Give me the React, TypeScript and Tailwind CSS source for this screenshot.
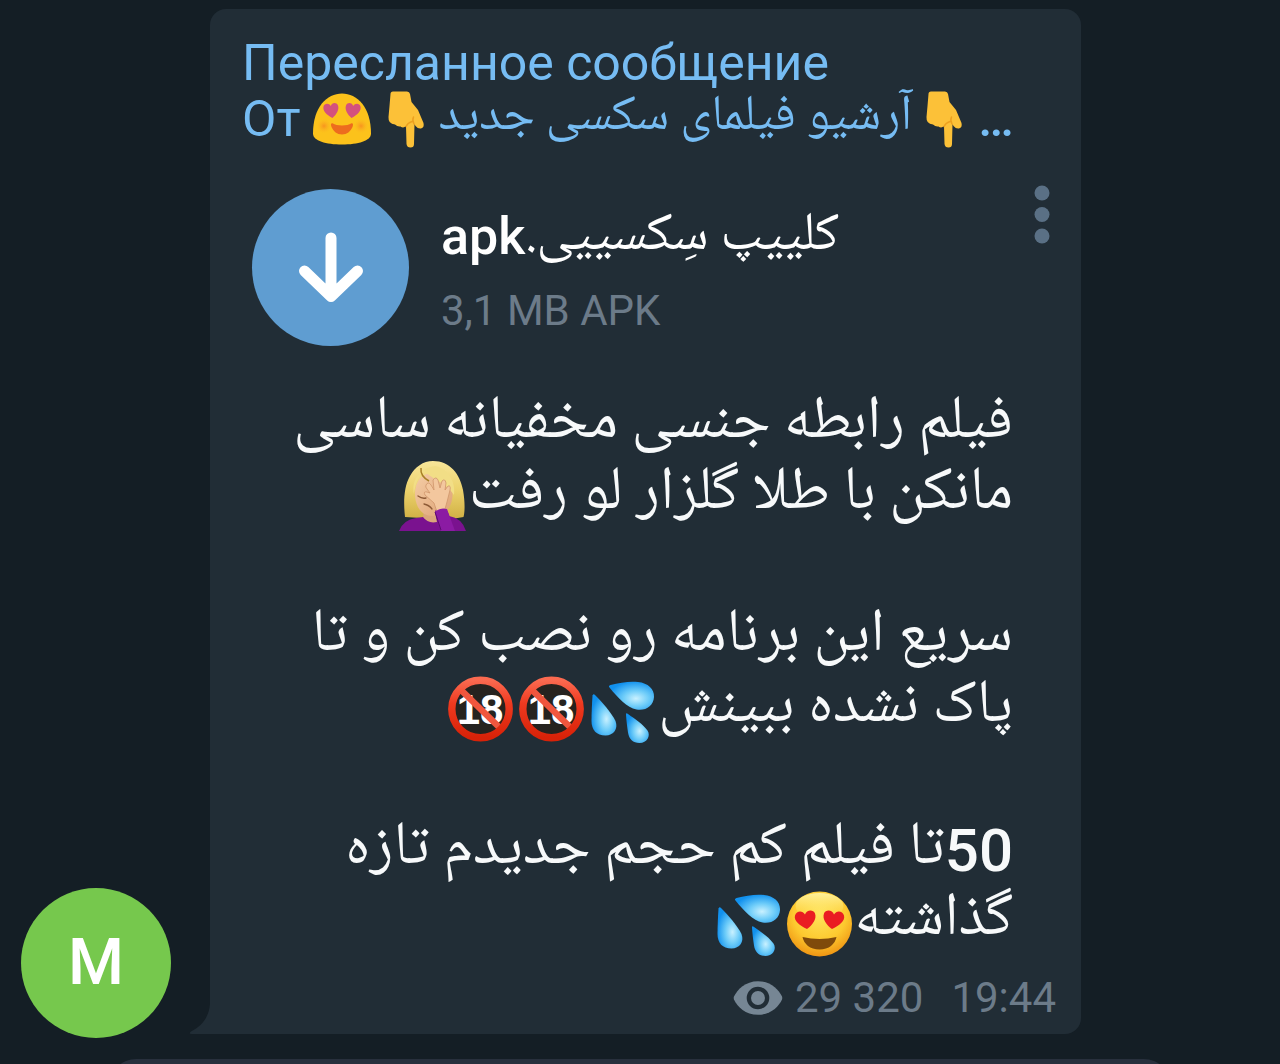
import type { ReactNode } from "react";

interface IconProps {
  className?: string;
}

interface EmojiProps extends IconProps {
  id: string;
}

function BlobHeartEyes({ className }: IconProps) {
  return (
    <svg viewBox="0 0 60 60" className={className} role="img" aria-label="😍">
      <defs>
        <radialGradient id="blob-cheek">
          <stop offset="0" stopColor="#f78b1f" stopOpacity="0.85" />
          <stop offset="1" stopColor="#fcb81f" stopOpacity="0" />
        </radialGradient>
      </defs>
      <path
        d="M30 4.500C45 4.500 59 18 59 44.500C59 52 46 55.500 30 55.500S1 52 1 44.500C1 18 15 4.500 30 4.500Z"
        fill="#fcc21b"
      />
      <circle cx="12" cy="37" r="7.500" fill="url(#blob-cheek)" />
      <circle cx="49" cy="37" r="7.500" fill="url(#blob-cheek)" />
      <path
        d="M20.500 29C14 25.500 10.500 21.500 11.500 17.500C12.500 14 17 14 18.800 17C19.800 13.500 24.500 13 26 16.500C27.500 20.500 24.500 25.500 20.500 29Z"
        fill="#d4517d"
      />
      <path
        d="M39.500 29C35.500 25.500 32.500 20.500 34 16.500C35.500 13 40.200 13.500 41.200 17C43 14 47.500 14 48.500 17.500C49.500 21.500 46 25.500 39.500 29Z"
        fill="#d4517d"
      />
      <path
        d="M21 34.500C24 37 36 37 39 34.500C41 33.500 41.500 35.500 40.500 38C38.500 42.500 35 45.500 30 45.500S21.500 42.500 19.500 38C18.500 35.500 19 33.500 21 34.500Z"
        fill="#ed6c1e"
      />
    </svg>
  );
}

function PointDown({ className }: IconProps) {
  return (
    <svg viewBox="0 0 60 60" className={className} role="img" aria-label="👇">
      <path
        d="M14.500 5Q14.500 2.500 17 2.500H31Q33.500 2.500 34 5L35.500 13L42 21L47.500 34Q48.500 38.500 45 39.500Q42 40 39.500 37L38.500 35L38 55Q38 58.500 34.500 58.500Q31 58.500 30.500 55L30 37Q27.500 39.500 24.500 37.500Q21.500 38 19 35.500Q12 35 12.500 28L13.500 17Z"
        fill="#fcc138"
      />
      <path
        d="M30 37.500Q31.500 34 36 32.500M37.500 28Q36 31 38 35"
        fill="none"
        stroke="#eda01f"
        strokeWidth="1.500"
        strokeLinecap="round"
      />
    </svg>
  );
}

function Facepalm({ className }: IconProps) {
  return (
    <svg viewBox="0 0 71 71" className={className} role="img" aria-label="🤦🏼‍♀️">
      <defs>
        <linearGradient id="hair" x1="0" y1="0" x2="0" y2="1">
          <stop offset="0" stopColor="#f8e699" />
          <stop offset="0.5" stopColor="#ecd26c" />
          <stop offset="1" stopColor="#d0b044" />
        </linearGradient>
        <linearGradient id="skin" x1="0" y1="0" x2="1" y2="1">
          <stop offset="0" stopColor="#f5cda6" />
          <stop offset="1" stopColor="#dda274" />
        </linearGradient>
      </defs>
      <path
        d="M7 57C5.500 44 5.500 27 12 16C17 7 25 1 35 1C52 1 62 14 65 30C67 41 67 52 65.500 57Q52 60 38 59T7 57Z"
        fill="url(#hair)"
      />
      <path d="M26 50H42V66H24Z" fill="#dba67b" />
      <path
        d="M17 36C16 22 24 13 34 13C47 13 55 22 54.500 36C54 48 46 56 35 56S18 48 17 36Z"
        fill="url(#skin)"
      />
      <path
        d="M16 34C17 26 19 19 26 10C32 19 47 21 56 35C58 22 50 8 37 6C22 8 13 20 16 34Z"
        fill="#f2de86"
      />
      <path d="M23 8Q22 16 31 21" fill="none" stroke="#a87f26" strokeWidth="1.500" />
      <path
        d="M1 71Q5 60 18 58L25 57Q30 64 39 62L37 52Q38 47 44 48Q49 48 51 56Q64 58 68 71Z"
        fill="#7a128f"
      />
      <path
        d="M28 25Q30 21 33 25L36 30L35 20Q38 16 40 20L42 28L44 21Q47 18 48 23L47 30L50 26Q53 25 52 30L49 42L47 49L39 52L36 43L27 35Q25 31 29 32L32 33L29 29Q27 27 28 25Z"
        fill="#f3c79e"
        stroke="#cf956b"
        strokeWidth="0.800"
      />
      <path
        d="M20 36Q24 39 28 38M26 44Q31 45 34 49"
        fill="none"
        stroke="#8d5a36"
        strokeWidth="1.300"
        strokeLinecap="round"
      />
      <path d="M37 52Q42 47 49 49L57 71H43Z" fill="#8b1ba3" />
      <path d="M37 52L43 70" stroke="#5c0a70" strokeWidth="1" />
    </svg>
  );
}

function SweatDrops({ className, id }: EmojiProps) {
  return (
    <svg viewBox="0 0 71 71" className={className} role="img" aria-label="💦">
      <defs>
        <radialGradient id={id} cx="0.6" cy="0.6" r="0.62">
          <stop offset="0" stopColor="#c9f1ff" />
          <stop offset="0.45" stopColor="#6fcdf9" />
          <stop offset="1" stopColor="#1191ee" />
        </radialGradient>
      </defs>
      <path
        d="M22.500 14.500Q21 13 23.500 12C33 9.500 43 8 51 9C61 10 67.500 16 67 24C66.500 33 59 38 49.500 36.500C40 34.500 31 25 22.500 14.500Z"
        fill={`url(#${id})`}
      />
      <path
        d="M5.500 22.500Q6.500 20.500 8 22C15 29 24 39 28.500 48C31.500 56 26.500 62.500 18.500 62.500C9.500 62.500 4.500 57 4.500 48C4.500 40 5 31 5.500 22.500Z"
        fill={`url(#${id})`}
      />
      <path
        d="M39 41.500Q39 39.500 41 41C48 46 56 51 60.500 57.500C64 63 60 70 52.500 70C46 70 42 66 41 59.500C40 53 39.500 48 39 41.500Z"
        fill={`url(#${id})`}
      />
    </svg>
  );
}

function NoUnder18({ className, id }: EmojiProps) {
  return (
    <svg viewBox="0 0 71 71" className={className} role="img" aria-label="🔞">
      <defs>
        <linearGradient id={id} x1="0" y1="0" x2="0" y2="1">
          <stop offset="0" stopColor="#fb6a50" />
          <stop offset="0.4" stopColor="#ee3a20" />
          <stop offset="1" stopColor="#d82208" />
        </linearGradient>
      </defs>
      <circle cx="35.500" cy="36" r="32" fill="#26231f" />
      <text
        x="35"
        y="51"
        textAnchor="middle"
        fill="#ffffff"
        className="font-['Liberation_Sans',sans-serif] text-[42px] font-bold"
      >
        18
      </text>
      <path d="M16 17L55 55" stroke="#f0563e" strokeWidth="6.500" />
      <circle cx="35.500" cy="36" r="28.700" fill="none" stroke={`url(#${id})`} strokeWidth="7.400" />
    </svg>
  );
}

function HeartEyes({ className }: IconProps) {
  return (
    <svg viewBox="0 0 71 71" className={className} role="img" aria-label="😍">
      <defs>
        <radialGradient id="face" cx="0.5" cy="0.35" r="0.68">
          <stop offset="0" stopColor="#ffe45c" />
          <stop offset="0.6" stopColor="#fdc92f" />
          <stop offset="1" stopColor="#ee8f10" />
        </radialGradient>
        <linearGradient id="face-shine" x1="0" y1="0" x2="0" y2="1">
          <stop offset="0" stopColor="#fff6a8" stopOpacity="0.9" />
          <stop offset="1" stopColor="#ffe45c" stopOpacity="0" />
        </linearGradient>
      </defs>
      <circle cx="35.500" cy="38" r="32.500" fill="url(#face)" />
      <ellipse cx="35.500" cy="20" rx="24" ry="13" fill="url(#face-shine)" />
      <path
        d="M23 43C16 39.500 9.500 35 11 29.500C12.500 24.500 18.500 24 21 28.500C22.500 24 29 23 31 27.500C33 33 28.500 39 23 43Z"
        fill="#ea1c22"
      />
      <path
        d="M48 43C42.500 39 38 33 40 27.500C42 23 48.500 24 50 28.500C52.500 24 58.500 24.500 60 29.500C61.500 35 55 39.500 48 43Z"
        fill="#ea1c22"
      />
      <path
        d="M18.500 51Q35.500 55 52.500 51C51 58 45 63.500 35.500 63.500S20 58 18.500 51Z"
        fill="#7f4a0b"
      />
    </svg>
  );
}

function EyeIcon({ className }: IconProps) {
  return (
    <svg viewBox="0 0 52 36" className={className} aria-hidden="true">
      <path
        d="M26 0.500C39 0.500 47.500 9 51 16.500Q51.500 18 51 19.500C47.500 27 39 35.500 26 35.500S4.500 27 1 19.500Q0.500 18 1 16.500C4.500 9 13 0.500 26 0.500Z"
        fill="#768694"
      />
      <circle cx="26" cy="18" r="9.500" fill="none" stroke="#212d36" strokeWidth="4.500" />
    </svg>
  );
}

function Line({ children }: { children?: ReactNode }) {
  return <div className="flex h-[71px] items-center whitespace-nowrap">{children}</div>;
}

const arabic = "font-['Noto_Naskh_Arabic','DejaVu_Sans',sans-serif]";

function Message() {
  return (
    <article className="relative mb-1 flex-1 rounded-2xl rounded-bl-none bg-[#212d36] pt-[26px] pb-[11px]">
      <svg viewBox="0 0 22 30" className="absolute bottom-0 -left-[21px] h-[30px] w-[22px]" aria-hidden="true">
        <path d="M22 0H21C20 13 13 22 2 27.500Q-1 30 3 30H22Z" fill="#212d36" />
      </svg>

      <header className="px-8 text-[50px] leading-[56px] text-[#76bcf3]">
        <p>Пересланное сообщение</p>
        <a href="#source" className="flex h-[56px] items-center whitespace-nowrap">
          <span>От</span>
          <BlobHeartEyes className="mr-1 ml-3 h-[60px] w-[60px] shrink-0" />
          <PointDown className="h-[60px] w-[60px] shrink-0" />
          <span dir="rtl" className={`${arabic} mx-[2px]`}>
            آرشیو فیلمای سکسی جدید
          </span>
          <PointDown className="mr-1 h-[60px] w-[60px] shrink-0" />
          <span className="font-medium">…</span>
        </a>
      </header>

      <section className="mt-[38px] flex items-start pr-7 pl-[42px]">
        <button
          type="button"
          aria-label="Скачать"
          className="mt-1 flex h-[157px] w-[157px] shrink-0 items-center justify-center rounded-full bg-[#5f9dd1]"
        >
          <svg viewBox="0 0 66 72" className="h-[72px] w-[66px]" aria-hidden="true">
            <path
              d="M33 6V62M6.500 39L33 64.500L59.500 39"
              fill="none"
              stroke="#ffffff"
              strokeWidth="11"
              strokeLinecap="round"
              strokeLinejoin="round"
            />
          </svg>
        </button>
        <div className="ml-8 flex-1 pt-[14px]">
          <h2 className="flex h-[76px] items-center leading-[72px] whitespace-nowrap text-white">
            <span className="text-[52px] font-medium">apk</span>
            <span dir="rtl" className={`${arabic} text-[54px]`}>
              کلییپ سِکسییی.
            </span>
          </h2>
          <p className="text-[42px] leading-[72px] text-[#6c7b89]">3,1 MB APK</p>
        </div>
        <button type="button" aria-label="Меню" className="shrink-0">
          <svg viewBox="0 0 22 60" className="h-[60px] w-[22px]" aria-hidden="true">
            <circle cx="11" cy="8" r="7.500" fill="#5a7085" />
            <circle cx="11" cy="29.500" r="7.500" fill="#5a7085" />
            <circle cx="11" cy="51" r="7.500" fill="#5a7085" />
          </svg>
        </button>
      </section>

      <section dir="rtl" className="mt-[42px] px-[68px] text-[61px] leading-[71px] text-[#f7f9fa]">
        <div className={arabic}>
          <Line>فیلم رابطه جنسی مخفیانه ساسی</Line>
          <Line>
            <span>مانکن با طلا گلزار لو رفت</span>
            <Facepalm className="h-[71px] w-[71px] shrink-0" />
          </Line>
          <Line />
          <Line>سریع این برنامه رو نصب کن و تا</Line>
          <Line>
            <span>پاک نشده ببینش</span>
            <SweatDrops id="drops-a" className="h-[71px] w-[71px] shrink-0" />
            <NoUnder18 id="ring-a" className="h-[71px] w-[71px] shrink-0" />
            <NoUnder18 id="ring-b" className="h-[71px] w-[71px] shrink-0" />
          </Line>
          <Line />
          <Line>
            <span className="font-['Roboto',sans-serif] text-[60px] font-medium">50</span>
            <span>تا فیلم کم حجم جدیدم تازه</span>
          </Line>
          <Line>
            <span>گذاشته</span>
            <HeartEyes className="h-[71px] w-[71px] shrink-0" />
            <SweatDrops id="drops-b" className="h-[71px] w-[71px] shrink-0" />
          </Line>
        </div>
      </section>

      <footer className="mt-4 flex items-center justify-end pr-[25px] text-[42px] leading-[50px] text-[#6c7b89]">
        <EyeIcon className="mr-3 h-9 w-[50px]" />
        <span className="mr-7">29 320</span>
        <time>19:44</time>
      </footer>
    </article>
  );
}

export default function App() {
  return (
    <main className="min-h-screen overflow-hidden bg-[#141e25] pt-[9px] font-['Roboto',sans-serif]">
      <div className="mr-[199px] ml-[21px] flex items-end">
        <div className="mr-[39px] flex h-[150px] w-[150px] shrink-0 items-center justify-center rounded-full bg-[#76c84d] text-[64px] font-medium text-white">
          M
        </div>
        <Message />
      </div>
      <div className="mx-[110px] mt-[21px] h-[5px] overflow-hidden">
        <div className="h-16 rounded-[26px] bg-[#28303d]" />
      </div>
    </main>
  );
}
